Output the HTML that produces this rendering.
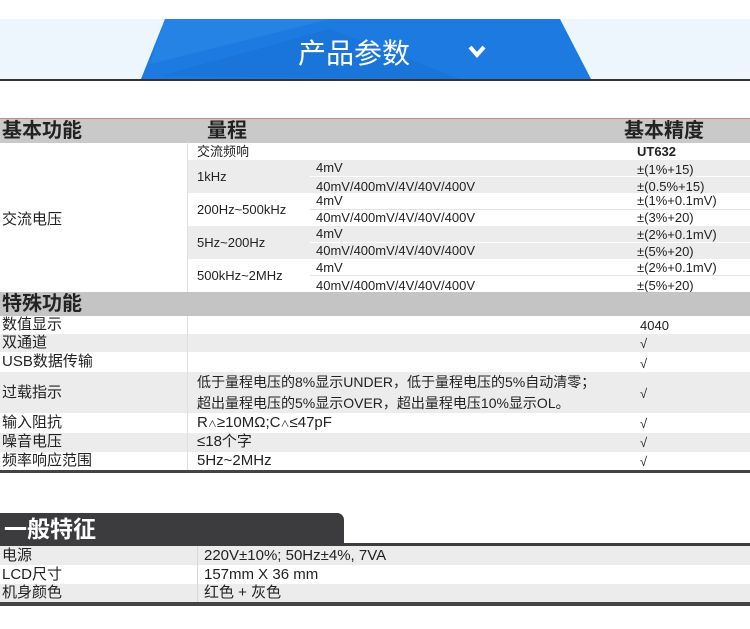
<!DOCTYPE html>
<html><head><meta charset="utf-8"><style>
body{margin:0;width:750px;height:629px;background:#fff;position:relative;overflow:hidden;font-family:"Liberation Sans","Noto Sans CJK SC",sans-serif;color:#222}
.a{position:absolute;white-space:nowrap}
.r{position:absolute;left:0;width:750px}
.g{background:#ececec}
.t{font-size:13px;line-height:16px}
.c{font-size:15px;line-height:18px}
.h{font-weight:bold;font-size:20px;line-height:24px;color:#222}
</style></head><body>
<div class="r" style="top:19px;height:61px;background:#eef6fd"></div>
<svg class="a" style="left:0;top:19px" width="750" height="63">
<polygon points="165,0 560,0 591,60 141,60" fill="#1c7ae0"/>
<polygon points="165,0 330,0 150,45" fill="#2a88e8" opacity=".7"/>
<polygon points="160,57 330,10 460,60" fill="#166fd4" opacity=".5"/>
<rect x="0" y="60" width="750" height="2" fill="#333"/>
<polyline points="470,28 477,36 484,28" fill="none" stroke="#fff" stroke-width="4"/>
</svg>
<div class="a" style="left:298px;top:34px;font-size:28px;line-height:36px;color:#fff;font-family:'Noto Sans CJK SC',sans-serif">产品参数</div>

<div class="r" style="top:118px;height:24px;background:#c9c9c9;border-top:1px solid #e08080"></div>
<div class="a h" style="left:2px;top:119px">基本功能</div>
<div class="a h" style="left:207px;top:119px">量程</div>
<div class="a h" style="left:624px;top:119px">基本精度</div>

<div class="a t" style="left:197px;top:144px">交流频响</div>
<div class="a t" style="left:637px;top:144px;font-weight:bold">UT632</div>
<div class="a g" style="left:188px;top:160px;width:562px;height:33px"></div>
<div class="a g" style="left:188px;top:226px;width:562px;height:33px"></div>
<div class="a" style="left:310px;top:176px;width:440px;height:1px;background:#fff"></div>
<div class="a" style="left:310px;top:209px;width:440px;height:1px;background:#e4e4e4"></div>
<div class="a" style="left:310px;top:242px;width:440px;height:1px;background:#fff"></div>
<div class="a" style="left:310px;top:275px;width:440px;height:1px;background:#e4e4e4"></div>
<div class="a" style="left:187px;top:142px;width:1px;height:150px;background:#e0e0e0"></div>
<div class="a c" style="left:2px;top:211px">交流电压</div>
<div class="a t" style="left:197px;top:169px">1kHz</div>
<div class="a t" style="left:197px;top:202px">200Hz~500kHz</div>
<div class="a t" style="left:197px;top:235px">5Hz~200Hz</div>
<div class="a t" style="left:197px;top:268px">500kHz~2MHz</div>
<div class="a t" style="left:316px;top:160px">4mV</div>
<div class="a t" style="left:316px;top:179px">40mV/400mV/4V/40V/400V</div>
<div class="a t" style="left:316px;top:193px">4mV</div>
<div class="a t" style="left:316px;top:210px">40mV/400mV/4V/40V/400V</div>
<div class="a t" style="left:316px;top:260px">4mV</div>
<div class="a t" style="left:316px;top:243px">40mV/400mV/4V/40V/400V</div>
<div class="a t" style="left:316px;top:226px">4mV</div>
<div class="a t" style="left:316px;top:278px">40mV/400mV/4V/40V/400V</div>
<div class="a t" style="left:637px;top:162px">±(1%+15)</div>
<div class="a t" style="left:637px;top:179px">±(0.5%+15)</div>
<div class="a t" style="left:637px;top:193px">±(1%+0.1mV)</div>
<div class="a t" style="left:637px;top:210px">±(3%+20)</div>
<div class="a t" style="left:637px;top:227px">±(2%+0.1mV)</div>
<div class="a t" style="left:637px;top:244px">±(5%+20)</div>
<div class="a t" style="left:637px;top:260px">±(2%+0.1mV)</div>
<div class="a t" style="left:637px;top:278px">±(5%+20)</div>

<div class="r" style="top:292px;height:24px;background:#c4c4c4"></div>
<div class="a h" style="left:2px;top:292px">特殊功能</div>
<div class="r g" style="top:334px;height:18px"></div>
<div class="r g" style="top:372px;height:41px"></div>
<div class="r g" style="top:433px;height:19px"></div>
<div class="a" style="left:187px;top:316px;width:1px;height:154px;background:#e0e0e0"></div>
<div class="a c" style="left:2px;top:316px">数值显示</div>
<div class="a c" style="left:2px;top:334px">双通道</div>
<div class="a c" style="left:2px;top:353px">USB数据传输</div>
<div class="a c" style="left:2px;top:384px">过载指示</div>
<div class="a c" style="left:2px;top:414px">输入阻抗</div>
<div class="a c" style="left:2px;top:433px">噪音电压</div>
<div class="a c" style="left:2px;top:452px">频率响应范围</div>
<div class="a t" style="left:640px;top:318px">4040</div>
<div class="a t" style="left:640px;top:336px">√</div>
<div class="a t" style="left:640px;top:356px">√</div>
<div class="a t" style="left:640px;top:386px">√</div>
<div class="a t" style="left:640px;top:416px">√</div>
<div class="a t" style="left:640px;top:435px">√</div>
<div class="a t" style="left:640px;top:454px">√</div>
<div class="a c" style="left:197px;top:373px;font-size:14px">低于量程电压的8%显示UNDER，低于量程电压的5%自动清零；</div>
<div class="a c" style="left:197px;top:394px;font-size:14px">超出量程电压的5%显示OVER，超出量程电压10%显示OL。</div>
<div class="a c" style="left:197px;top:414px">R<span style="font-size:9px">∧</span>≥10MΩ;C<span style="font-size:9px">∧</span>≤47pF</div>
<div class="a c" style="left:197px;top:433px">≤18个字</div>
<div class="a c" style="left:197px;top:452px">5Hz~2MHz</div>
<div class="r" style="top:470px;height:3px;background:#444"></div>

<div class="a" style="left:0;top:513px;width:344px;height:32px;background:#3c3c3e;border-top-right-radius:7px"></div>
<div class="a" style="left:4px;top:514px;font-size:23px;line-height:30px;font-weight:bold;color:#fff">一般特征</div>
<div class="r" style="top:543px;height:3px;background:#3c3c3e"></div>
<div class="r g" style="top:546px;height:19px"></div>
<div class="r g" style="top:584px;height:18px"></div>
<div class="a" style="left:197px;top:546px;width:1px;height:56px;background:#d8d8d8"></div>
<div class="a c" style="left:2px;top:547px">电源</div>
<div class="a c" style="left:2px;top:566px">LCD尺寸</div>
<div class="a c" style="left:2px;top:584px">机身颜色</div>
<div class="a c" style="left:204px;top:547px">220V±10%; 50Hz±4%, 7VA</div>
<div class="a c" style="left:204px;top:566px">157mm X 36 mm</div>
<div class="a c" style="left:204px;top:584px">红色 + 灰色</div>
<div class="r" style="top:602px;height:4px;background:#444"></div>
</body></html>
